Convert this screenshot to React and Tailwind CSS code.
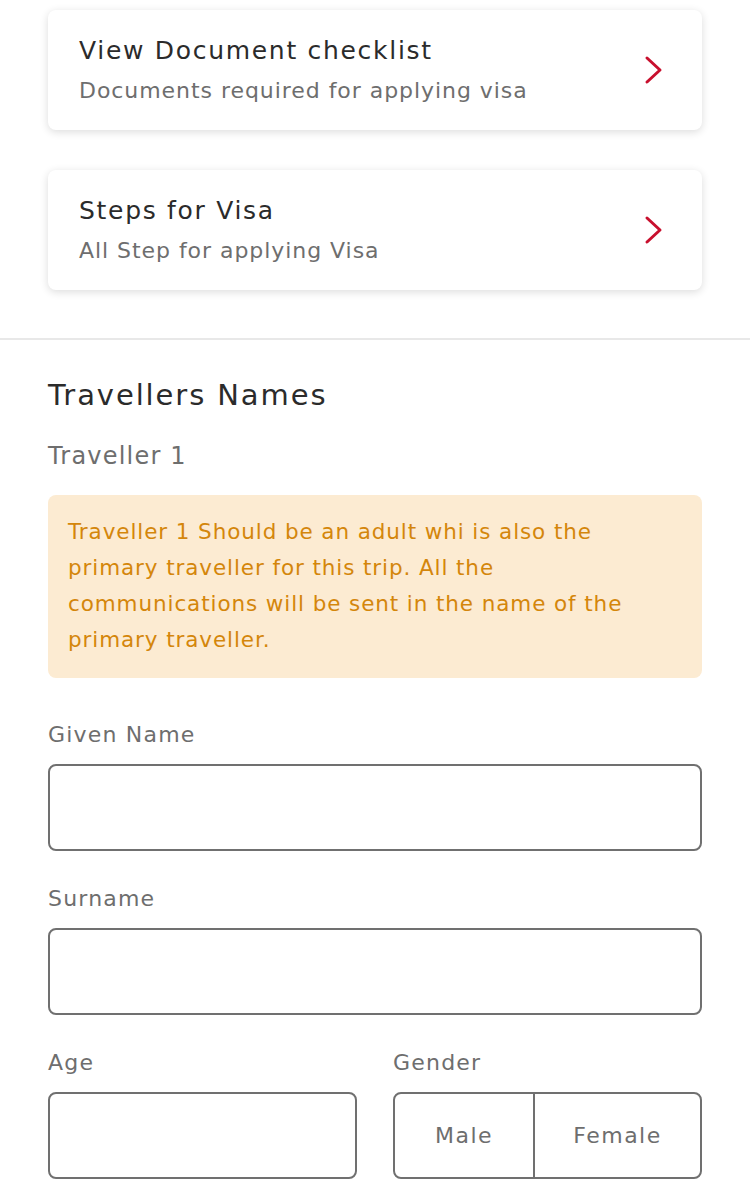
import React from "react";

function Chevron() {
  return (
    <svg width="20" height="30" viewBox="0 0 20 30" fill="none">
      <path d="M3 3 L16 15 L3 27" stroke="#c8102e" strokeWidth="3" strokeLinecap="round" strokeLinejoin="round" />
    </svg>
  );
}

function LinkCard({ title, sub }) {
  return (
    <div className="mx-[48px] h-[120px] rounded-[8px] bg-white shadow-[0_2px_8px_rgba(0,0,0,0.14)] flex items-center justify-between pl-[31px] pr-[38px]">
      <div className="flex flex-col">
        <div className="text-[25px] leading-[34px] tracking-[1.7px] text-[#2b2b2b]">{title}</div>
        <div className="text-[22px] leading-[30px] tracking-[0.95px] text-[#6e6e6e] mt-[8px]">{sub}</div>
      </div>
      <Chevron />
    </div>
  );
}

function Label({ children }) {
  return <div className="text-[22px] leading-[30px] tracking-[1.2px] text-[#6e6e6e]">{children}</div>;
}

function Field({ label }) {
  return (
    <div className="flex flex-col">
      <Label>{label}</Label>
      <div className="mt-[14px] h-[87px] rounded-[8px] border-2 border-[#707070]" />
    </div>
  );
}

export default function App() {
  return (
    <div className="w-[750px] h-[1180px] overflow-hidden bg-white" style={{ fontFamily: '"DejaVu Sans", sans-serif' }}>
      <div className="pt-[10px]">
        <LinkCard title="View Document checklist" sub="Documents required for applying visa" />
        <div className="h-[40px]" />
        <LinkCard title="Steps for Visa" sub="All Step for applying Visa" />
      </div>
      <div className="mt-[48px] h-[2px] bg-[#e8e8e8]" />
      <div className="px-[48px] pt-[35px]">
        <div className="text-[29px] leading-[40px] tracking-[1.9px] text-[#2b2b2b]">Travellers Names</div>
        <div className="mt-[24px] text-[24px] leading-[34px] tracking-[1.2px] text-[#6e6e6e]">Traveller 1</div>
        <div className="mt-[22px] rounded-[8px] bg-[#fcebd2] px-[20px] pt-[19px] h-[183px]">
          <div className="text-[21.5px] leading-[36px] tracking-[0.9px] text-[#d4860b]">
            <span className="block">Traveller 1 Should be an adult whi is also the</span>
            <span className="block">primary traveller for this trip. All the</span>
            <span className="block">communications will be sent in the name of the</span>
            <span className="block">primary traveller.</span>
          </div>
        </div>
        <div className="mt-[42px]">
          <Field label="Given Name" />
        </div>
        <div className="mt-[33px]">
          <Field label="Surname" />
        </div>
        <div className="mt-[33px] grid grid-cols-2 gap-[36px]">
          <Field label="Age" />
          <div className="flex flex-col">
            <Label>Gender</Label>
            <div className="mt-[14px] h-[87px] rounded-[8px] border-2 border-[#707070] flex">
              <div className="w-[140px] border-r-2 border-[#707070] flex items-center justify-center text-[22px] tracking-[1.5px] text-[#6e6e6e]">Male</div>
              <div className="flex-1 flex items-center justify-center text-[22px] tracking-[1.5px] text-[#6e6e6e]">Female</div>
            </div>
          </div>
        </div>
      </div>
    </div>
  );
}
